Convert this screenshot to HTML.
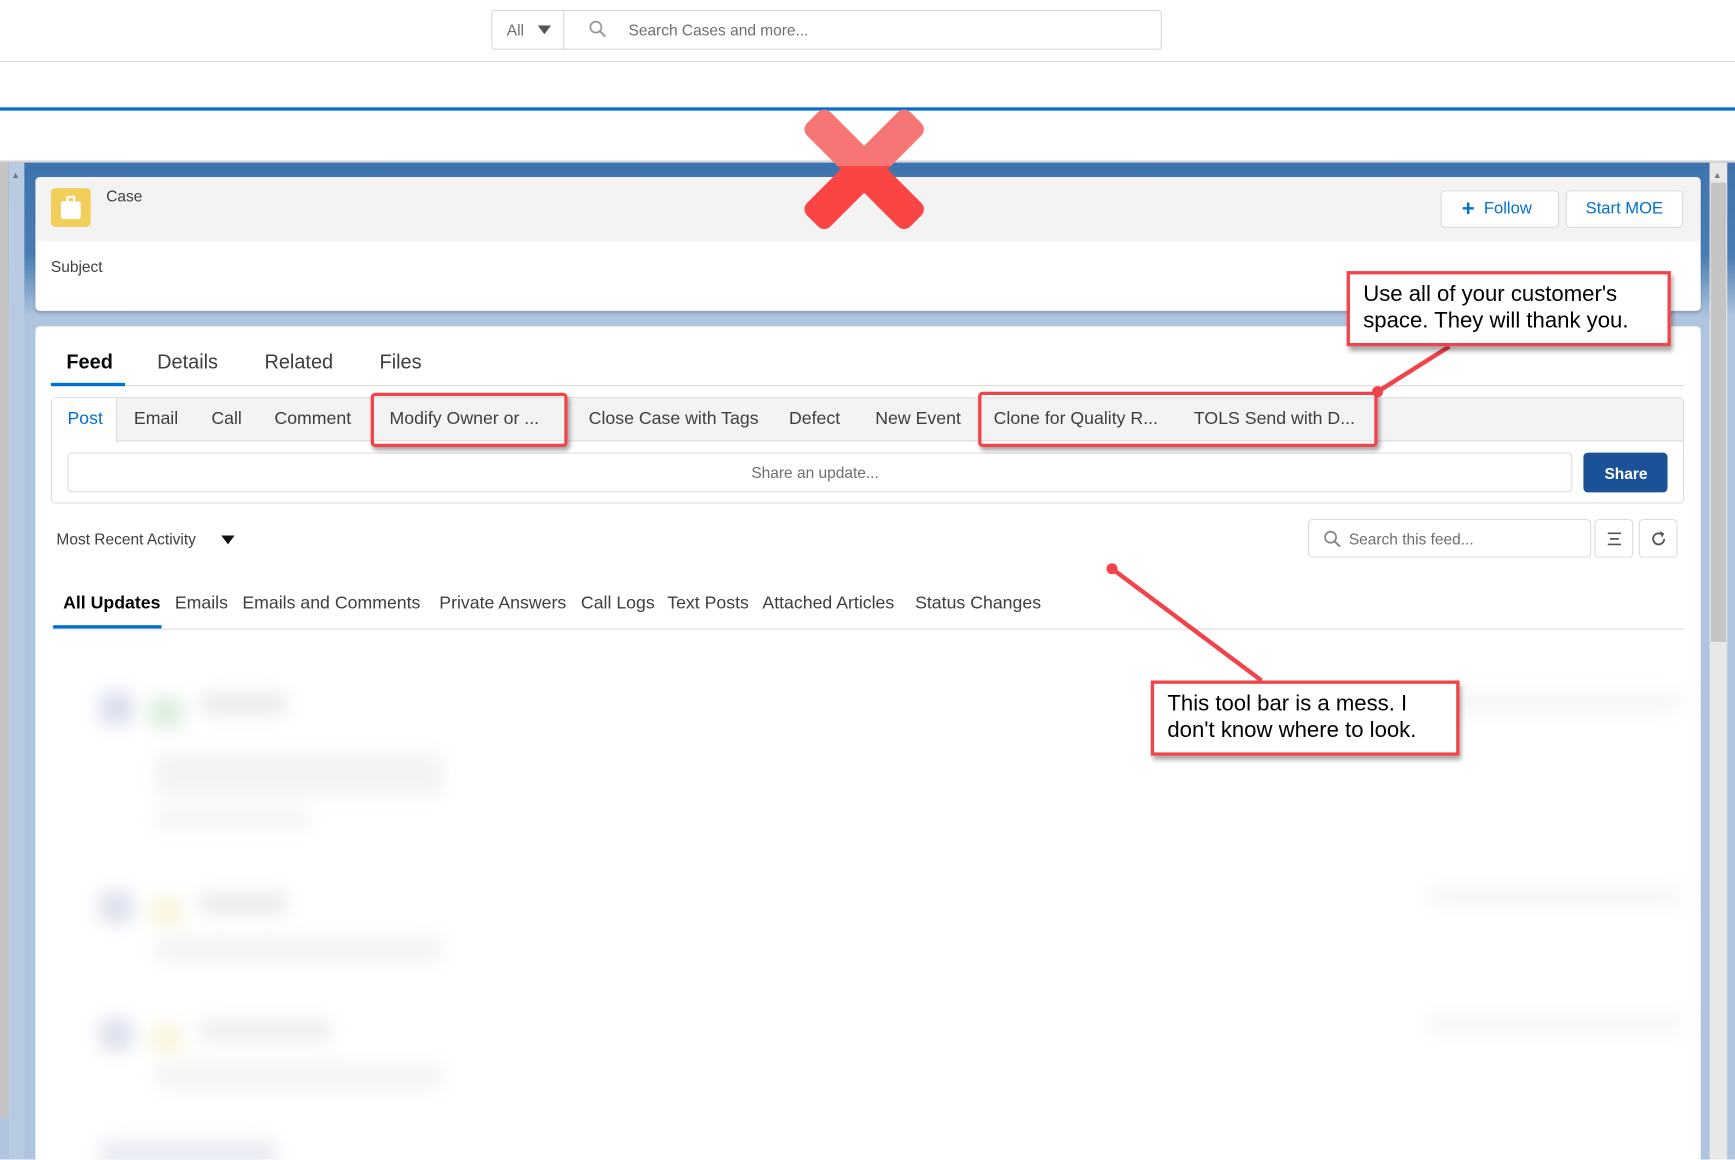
<!DOCTYPE html>
<html><head><meta charset="utf-8"><style>
*{box-sizing:border-box;margin:0;padding:0}
html,body{width:1735px;height:1160px;overflow:hidden;background:#fff}
#w{position:absolute;left:0;top:0;width:1568px;height:1048px;transform:scale(1.10651);transform-origin:0 0;font-family:"Liberation Sans",sans-serif;color:#3e3e3c;overflow:hidden}
.a{position:absolute}
.t{position:absolute;white-space:nowrap;font-size:16px;line-height:20px}
.red{position:absolute;border:3px solid #f1444a;border-radius:4px;box-shadow:2px 3px 4px rgba(0,0,0,.35)}
.call{position:absolute;background:#fff;border:3px solid #f1444a;box-shadow:2px 4px 4px rgba(0,0,0,.35);font-size:20px;line-height:24px;color:#000;padding:6px 12px}
.blur{position:absolute;filter:blur(8px);border-radius:6px;opacity:.7}
</style></head><body><div id="w">
<div class="a" style="left:0;top:55px;width:1568px;height:1px;background:#ddd"></div>
<div class="a" style="left:444px;top:9px;width:606px;height:36px;border:1px solid #d8d8d8;border-radius:3px"></div>
<div class="a" style="left:509px;top:9px;width:1px;height:36px;background:#d8d8d8"></div>
<div class="t" style="left:458px;top:17px;font-size:14px;color:#706e6b">All</div>
<div class="a" style="left:486px;top:23px;border-left:6px solid transparent;border-right:6px solid transparent;border-top:8px solid #555"></div>
<svg class="a" style="left:532px;top:18px" width="16" height="16"><circle cx="6.5" cy="6.5" r="5" fill="none" stroke="#999" stroke-width="1.6"/><path d="M10 10l5 5" stroke="#999" stroke-width="1.8"/></svg>
<div class="t" style="left:568px;top:17px;font-size:14px;color:#706e6b">Search Cases and more...</div>
<div class="a" style="left:0;top:97px;width:1568px;height:3px;background:#0070d2"></div>
<div class="a" style="left:0;top:145px;width:1568px;height:903px;background:#b0c4df;border-top:2px solid #d8d8d8"></div>
<div class="a" style="left:0;top:147px;width:1568px;height:140px;background:linear-gradient(#3e74ad,#4a7db3 60%,#b0c4df)"></div>
<div class="a" style="left:0;top:147px;width:8px;height:863px;background:#c4c4c4"></div>
<div class="a" style="left:8px;top:147px;width:14px;height:901px;background:#b8cbe3"></div>
<div class="a" style="left:1545px;top:147px;width:16px;height:901px;background:#e8e8e8"></div>
<div class="a" style="left:1546px;top:165px;width:14px;height:415px;background:#c4c4c4"></div>
<div class="t" style="left:10px;top:149px;font-size:8px;color:#777">▲</div>
<div class="t" style="left:1548px;top:149px;font-size:8px;color:#777">▲</div>
<div class="a" style="left:32px;top:160px;width:1505px;height:121px;background:#fff;border-radius:4px;box-shadow:0 2px 2px rgba(0,0,0,.15);overflow:hidden">
 <div class="a" style="left:0;top:0;width:1505px;height:58px;background:#f3f3f3"></div>
</div>
<div class="a" style="left:46px;top:170px;width:36px;height:35px;background:#f2cf5b;border-radius:4px"></div>
<div class="a" style="left:55px;top:182px;width:18px;height:16px;background:#fff;border-radius:2px"></div>
<div class="a" style="left:60px;top:177px;width:8px;height:6px;border:2px solid #fff;border-bottom:none"></div>
<div class="t" style="left:96px;top:167px;font-size:14px">Case</div>
<div class="a" style="left:1302px;top:172px;width:107px;height:34px;background:#fff;border:1px solid #dddbda;border-radius:4px"></div>
<div class="t" style="left:1321px;top:179px;font-size:15px;color:#0070d2"><b style="font-size:20px;line-height:18px;vertical-align:-2px">+</b>&nbsp; Follow</div>
<div class="a" style="left:1415px;top:172px;width:106px;height:34px;background:#fff;border:1px solid #dddbda;border-radius:4px"></div>
<div class="t" style="left:1433px;top:179px;font-size:15px;color:#0070d2">Start MOE</div>
<div class="t" style="left:46px;top:231px;font-size:14px">Subject</div>
<div class="a" style="left:32px;top:295px;width:1505px;height:760px;background:#fff;border-radius:4px"></div>
<div class="t" style="left:60px;top:317px;font-size:18px;font-weight:bold;color:#080707">Feed</div>
<div class="t" style="left:142px;top:317px;font-size:18px">Details</div>
<div class="t" style="left:239px;top:317px;font-size:18px">Related</div>
<div class="t" style="left:343px;top:317px;font-size:18px">Files</div>
<div class="a" style="left:46px;top:348px;width:1476px;height:1px;background:#dddbda"></div>
<div class="a" style="left:46px;top:346px;width:67px;height:3px;background:#0070d2"></div>
<div class="a" style="left:46px;top:359px;width:1476px;height:96px;border:1px solid #dddbda;border-radius:4px"></div>
<div class="a" style="left:47px;top:360px;width:1474px;height:39px;background:#f3f3f3;border-bottom:1px solid #dddbda"></div>
<div class="a" style="left:47px;top:360px;width:59px;height:40px;background:#fff;border-right:1px solid #dddbda"></div>
<div class="t" style="left:61px;top:369px;color:#0070d2">Post</div>
<div class="t" style="left:121px;top:369px">Email</div>
<div class="t" style="left:191px;top:369px">Call</div>
<div class="t" style="left:248px;top:369px">Comment</div>
<div class="t" style="left:352px;top:369px">Modify Owner or ...</div>
<div class="t" style="left:532px;top:369px">Close Case with Tags</div>
<div class="t" style="left:713px;top:369px">Defect</div>
<div class="t" style="left:791px;top:369px">New Event</div>
<div class="t" style="left:898px;top:369px">Clone for Quality R...</div>
<div class="t" style="left:1079px;top:369px">TOLS Send with D...</div>
<div class="a" style="left:61px;top:409px;width:1360px;height:36px;border:1px solid #dddbda;border-radius:4px"></div>
<div class="t" style="left:679px;top:417px;font-size:14px;color:#706e6b">Share an update...</div>
<div class="a" style="left:1431px;top:409px;width:76px;height:36px;background:#1b5297;border-radius:4px"></div>
<div class="t" style="left:1450px;top:418px;font-size:14px;color:#fff;font-weight:bold">Share</div>
<div class="t" style="left:51px;top:477px;font-size:14px;color:#3e3e3c">Most Recent Activity</div>
<div class="a" style="left:200px;top:484px;border-left:6px solid transparent;border-right:6px solid transparent;border-top:8px solid #111"></div>
<div class="a" style="left:1182px;top:469px;width:256px;height:35px;border:1px solid #dddbda;border-radius:4px"></div>
<svg class="a" style="left:1196px;top:479px" width="16" height="16"><circle cx="6.5" cy="6.5" r="5" fill="none" stroke="#888" stroke-width="1.6"/><path d="M10 10l5 5" stroke="#888" stroke-width="1.8"/></svg>
<div class="t" style="left:1219px;top:477px;font-size:14px;color:#706e6b">Search this feed...</div>
<div class="a" style="left:1441px;top:469px;width:35px;height:35px;border:1px solid #dddbda;border-radius:4px"></div>
<svg class="a" style="left:1451px;top:479px" width="16" height="16"><path d="M2 3h12M4 8h8M2 13h12" stroke="#555" stroke-width="1.5"/></svg>
<div class="a" style="left:1481px;top:469px;width:35px;height:35px;border:1px solid #dddbda;border-radius:4px"></div>
<svg class="a" style="left:1491px;top:479px" width="16" height="16"><path d="M13 8a5 5 0 1 1-2-4" fill="none" stroke="#555" stroke-width="1.7"/><path d="M9 1l4 2-2 4z" fill="#555"/></svg>
<div class="t" style="left:57px;top:536px;font-weight:bold;color:#080707">All Updates</div>
<div class="t" style="left:158px;top:536px">Emails</div>
<div class="t" style="left:219px;top:536px">Emails and Comments</div>
<div class="t" style="left:397px;top:536px">Private Answers</div>
<div class="t" style="left:525px;top:536px">Call Logs</div>
<div class="t" style="left:603px;top:536px">Text Posts</div>
<div class="t" style="left:689px;top:536px">Attached Articles</div>
<div class="t" style="left:827px;top:536px">Status Changes</div>
<div class="a" style="left:48px;top:568px;width:1474px;height:1px;background:#dddbda"></div>
<div class="a" style="left:48px;top:565px;width:98px;height:3px;background:#0070d2"></div>
<div class="blur" style="left:90px;top:625px;width:30px;height:30px;background:#c8d0e4"></div>
<div class="blur" style="left:135px;top:630px;width:30px;height:28px;background:#c9e6cc"></div>
<div class="blur" style="left:180px;top:625px;width:80px;height:22px;background:#e4e4e8"></div>
<div class="blur" style="left:140px;top:680px;width:260px;height:40px;background:#eeeeee"></div>
<div class="blur" style="left:140px;top:730px;width:140px;height:20px;background:#f0f0f0"></div>
<div class="blur" style="left:1290px;top:625px;width:230px;height:20px;background:#f3f3f3"></div>
<div class="blur" style="left:90px;top:805px;width:30px;height:30px;background:#cdd4e6"></div>
<div class="blur" style="left:135px;top:810px;width:30px;height:28px;background:#f6f0d0"></div>
<div class="blur" style="left:180px;top:805px;width:80px;height:22px;background:#e4e4e8"></div>
<div class="blur" style="left:140px;top:845px;width:260px;height:25px;background:#efefef"></div>
<div class="blur" style="left:1290px;top:800px;width:230px;height:20px;background:#f3f3f3"></div>
<div class="blur" style="left:90px;top:920px;width:30px;height:30px;background:#cdd4e6"></div>
<div class="blur" style="left:135px;top:925px;width:30px;height:28px;background:#f6f0d0"></div>
<div class="blur" style="left:180px;top:920px;width:120px;height:22px;background:#e8e8ec"></div>
<div class="blur" style="left:140px;top:960px;width:260px;height:25px;background:#efefef"></div>
<div class="blur" style="left:1290px;top:915px;width:230px;height:20px;background:#f3f3f3"></div>
<div class="blur" style="left:90px;top:1030px;width:160px;height:30px;background:#e0e4ee"></div>
<div class="red" style="left:335px;top:355px;width:178px;height:49px"></div>
<div class="red" style="left:884px;top:354px;width:361px;height:50px"></div>
<svg class="a" style="left:0;top:0" width="1568" height="1048">
<path d="M1310 313L1245 354" stroke="#f1444a" stroke-width="4"/>
<circle cx="1245" cy="354" r="5" fill="#f1444a"/>
<path d="M1005 514L1140 615" stroke="#f1444a" stroke-width="4"/>
<circle cx="1005" cy="514" r="5" fill="#f1444a"/>
<defs><clipPath id="top"><rect x="700" y="80" width="160" height="70"/></clipPath><clipPath id="bot"><rect x="700" y="150" width="160" height="80"/></clipPath></defs>
<g clip-path="url(#top)" fill="#f67676"><rect x="766" y="87" width="30" height="132" rx="8" transform="rotate(-45 781 153)"/><rect x="766" y="87" width="30" height="132" rx="8" transform="rotate(45 781 153)"/></g>
<g clip-path="url(#bot)" fill="#fb4444"><rect x="766" y="87" width="30" height="132" rx="8" transform="rotate(-45 781 153)"/><rect x="766" y="87" width="30" height="132" rx="8" transform="rotate(45 781 153)"/></g>
</svg>
<div class="call" style="left:1217px;top:245px;width:293px;height:68px">Use all of your customer's space. They will thank you.</div>
<div class="call" style="left:1040px;top:615px;width:279px;height:68px">This tool bar is a mess. I don't know where to look.</div>
</div></body></html>
